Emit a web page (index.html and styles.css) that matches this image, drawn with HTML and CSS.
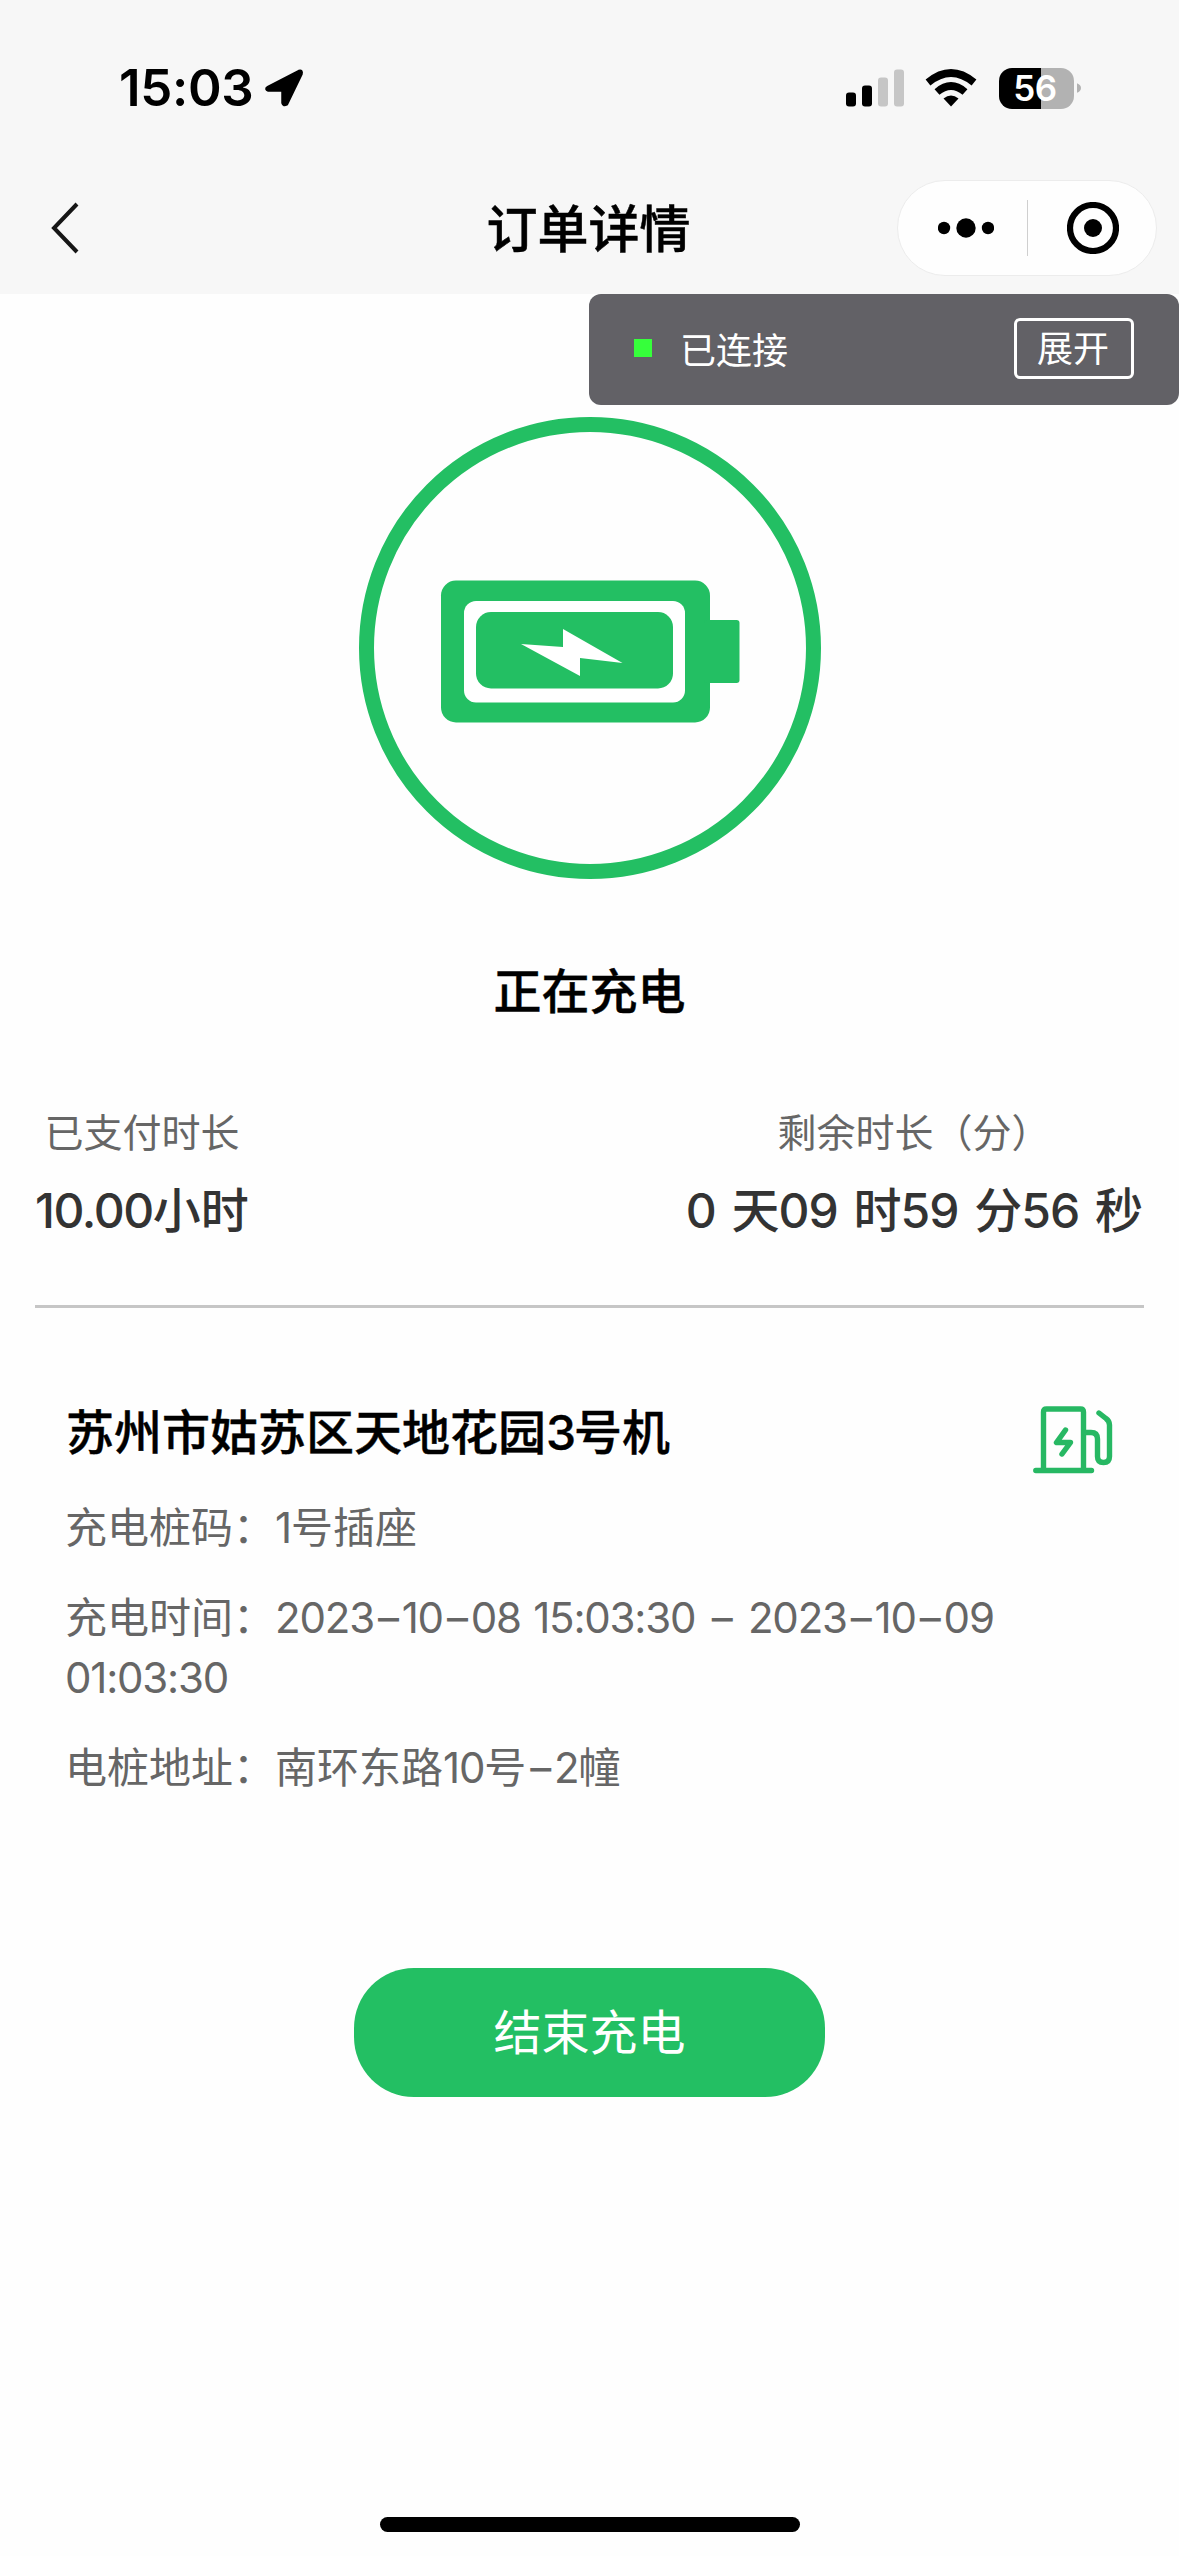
FILE: index.html
```html
<!DOCTYPE html>
<html lang="zh-CN">
<head>
<meta charset="utf-8">
<title>订单详情</title>
<link rel="stylesheet" href="styles.css">
</head>
<body>
<div class="screen">
  <header class="top">
    <div class="status">
      <div class="clock">
        <span class="clock-time">15:03</span>
        <svg class="location" viewBox="0 0 40 40"><path d="M4 19.500L35 3.500Q38 2.500 37 6L22.500 36Q19.500 37.500 19 35V22H4.500Q1.500 21 4 19.500Z" fill="#000" stroke="#000" stroke-width="3.500" stroke-linejoin="round"/></svg>
      </div>
      <div class="indicators">
        <svg class="signal" viewBox="0 0 58 38"><rect y="23.500" width="10" height="14" rx="3"/><rect x="16" y="16.500" width="10" height="21" rx="3"/><rect x="32" y="8.500" width="10" height="29" rx="3" fill="#c6c6c6"/><rect x="48" y="0.500" width="10" height="37" rx="3" fill="#c6c6c6"/></svg>
        <svg class="wifi" viewBox="0 0 52 38"><g fill="none" stroke="#000" stroke-width="7.500"><path d="M3 13.500Q26 -5.500 49 13.500"/><path d="M12 23Q26 11 40 23"/></g><path d="M18.500 29.500Q26 23.500 33.500 29.500L26 37.500Z"/></svg>
        <div class="battery"><span class="battery-level">56</span></div>
        <svg class="battery-tip" viewBox="0 0 5 12"><path d="M0 0Q5 2 5 6T0 12Z" fill="#b2b2b2"/></svg>
      </div>
    </div>
    <nav class="nav">
      <svg class="back" viewBox="0 0 28 52"><path d="M26 2L3 26L26 50" fill="none" stroke="#161616" stroke-width="4"/></svg>
      <h1 class="nav-title">订单详情</h1>
      <div class="capsule">
        <svg class="more" viewBox="0 0 56 20"><circle cx="6" cy="10" r="6.200"/><circle cx="28" cy="10" r="9.700"/><circle cx="50" cy="10" r="6.200"/></svg>
        <span class="capsule-line"></span>
        <svg class="close" viewBox="0 0 52 52"><circle cx="26" cy="26" r="23" fill="none" stroke="#000" stroke-width="6.200"/><circle cx="26" cy="26" r="9"/></svg>
      </div>
    </nav>
  </header>
  <aside class="connection">
    <span class="dot"></span>
    <span class="connection-text">已连接</span>
    <button class="expand">展开</button>
  </aside>
  <main class="content">
    <svg class="charge" viewBox="0 0 462 462">
      <circle cx="231" cy="231" r="223.500" fill="none" stroke="#23bf63" stroke-width="15"/>
      <rect x="82" y="163.500" width="269" height="142" rx="15" fill="#23bf63"/>
      <rect x="345" y="203" width="35.500" height="63" rx="3" fill="#23bf63"/>
      <rect x="105" y="184" width="221" height="101.500" rx="12" fill="#fff"/>
      <rect x="117" y="195" width="197" height="76.500" rx="15" fill="#23bf63"/>
      <path d="M162 227L204 230V212L263.500 246L221 241V259Z" fill="#fff"/>
    </svg>
    <h2 class="state">正在充电</h2>
    <section class="durations">
      <div class="duration">
        <span class="duration-label">已支付时长</span>
        <span class="duration-value"><span class="paid">10.00</span>小时</span>
      </div>
      <div class="duration remaining">
        <span class="duration-label">剩余时长（分）</span>
        <span class="duration-value countdown">0 天09 时59 分56 秒</span>
      </div>
    </section>
    <section class="station">
      <div class="station-head">
        <h3 class="station-name">苏州市姑苏区天地花园<span class="unit">3</span>号机</h3>
        <svg class="pump" viewBox="0 0 80 68"><g fill="none" stroke="#27b863" stroke-width="5.400" stroke-linecap="round" stroke-linejoin="round"><path d="M2.800 64.500H58.500M10.500 64V6Q10.500 3 13.500 3H47.500Q50.500 3 50.500 6V64"/><path d="M51 26.500H58Q64.500 26.500 64.500 33V50.500Q64.500 56.500 70.500 56.500T76.500 50.500V19Q76.500 15 73 12.500L66 7"/><path d="M32.500 24L23.500 36.500H37.500L29 48"/></g></svg>
      </div>
      <p class="detail">充电桩码：<span class="num">1</span>号插座</p>
      <p class="detail">充电时间：<span class="num">2023<span class="dash">–</span>10<span class="dash">–</span>08 15:03:30 <span class="dash">–</span> 2023<span class="dash">–</span>10<span class="dash">–</span>09 01:03:30</span></p>
      <p class="detail">电桩地址：南环东路<span class="num">10</span>号<span class="num"><span class="dash">–</span>2</span>幢</p>
    </section>
    <button class="stop">结束充电</button>
  </main>
  <div class="home"></div>
</div>
</body>
</html>
```
FILE: styles.css
```css
* { box-sizing: border-box; }
body, h1, h2, h3, p { margin: 0; }
body { background: #fefefe; font-family: Inter, "Noto Sans CJK SC", sans-serif; color: #000; }
button { font-family: inherit; margin: 0; padding: 0; }
svg { display: block; flex: none; }
.screen { position: relative; display: flex; flex-direction: column; width: 1179px; height: 2556px; overflow: hidden; }

.top { height: 294px; background: #f7f7f7; }
.status { display: flex; justify-content: space-between; align-items: center; height: 176px; padding: 0 98px 0 119px; }
.clock { display: flex; align-items: center; gap: 12px; }
.clock-time { width: 133px; font-size: 51px; font-weight: 600; line-height: 60px; letter-spacing: -0.300px; white-space: nowrap; }
.location { width: 40px; height: 40px; }
.indicators { display: flex; align-items: center; }
.signal { width: 58px; height: 38px; }
.wifi { width: 52px; height: 38px; margin-left: 21px; }
.battery { display: flex; align-items: center; justify-content: center; width: 75px; height: 41px; margin-left: 22px; border-radius: 13px; background: linear-gradient(90deg, #000 55.500%, #b2b2b2 55.500%); color: #fff; }
.battery-level { margin-right: 3px; font-size: 35px; font-weight: 600; line-height: 41px; letter-spacing: -0.5px; }
.battery-tip { width: 4px; height: 12px; margin-left: 3px; }

.nav { display: grid; grid-template-columns: 282px 1fr 282px; align-items: center; height: 104px; }
.back { width: 28px; height: 52px; margin-left: 51px; }
.nav-title { margin-top: 4px; padding-right: 2px; text-align: center; font-size: 51px; font-weight: 500; line-height: 70px; -webkit-text-stroke: 0.500px #000; }
.capsule { display: flex; align-items: center; width: 260px; height: 96px; padding: 0 0 0 40px; border: 1px solid #ececec; border-radius: 48px; background: #fefefe; }
.more { width: 56px; height: 20px; }
.capsule-line { flex: none; width: 1px; height: 56px; margin: 0 39px 0 33px; background: #cfcfcf; }
.close { width: 52px; height: 52px; }

.connection { position: absolute; top: 294px; right: 0; display: flex; align-items: center; width: 590px; height: 111px; padding: 0 45px; border-radius: 12px; background: #626166; color: #fff; }
.dot { width: 18px; height: 18px; margin-top: -3px; background: #36ff3b; }
.connection-text { margin: 3px 0 0 28px; font-size: 36px; line-height: 52px; }
.expand { width: 120px; height: 61px; margin: -3px 0 0 auto; padding: 1px 2px 0 0; border: 3px solid #fff; border-radius: 6px; background: none; color: #fff; font-size: 36px; line-height: 52px; }

.content { display: flex; flex-direction: column; padding: 123px 35px 0; }
.charge { align-self: center; width: 462px; height: 462px; }
.state { margin-top: 78px; text-align: center; font-size: 48px; font-weight: 500; line-height: 70px; -webkit-text-stroke: 0.400px #000; }
.durations { display: flex; justify-content: space-between; height: 210px; margin-top: 71px; border-bottom: 3px solid #c6c6c6; }
.duration { display: flex; flex-direction: column; align-items: center; }
.remaining { padding-right: 2px; }
.duration-label { font-size: 39px; line-height: 70px; color: #666; }
.duration-value { margin-top: 5px; font-size: 48px; font-weight: 500; line-height: 76px; color: #333; white-space: nowrap; }
.paid { letter-spacing: -1.400px; }
.countdown { letter-spacing: -1px; word-spacing: 4px; }

.station { padding: 86px 31px 0; }
.station-head { display: flex; justify-content: space-between; align-items: flex-start; height: 104px; }
.station-name { margin-top: 4px; font-size: 48px; font-weight: 500; line-height: 70px; -webkit-text-stroke: 0.400px #000; }
.unit { letter-spacing: -2px; }
.pump { width: 80px; height: 68px; margin-top: 12px; }
.detail { margin: 0 0 30px -1px; font-size: 42px; line-height: 60px; color: #666; }
.num { letter-spacing: -1.200px; word-spacing: 1.800px; }
.dash { padding: 0 4px; }
.stop { align-self: center; width: 471px; height: 129px; margin-top: 140px; border: 0; border-radius: 60px; background: #23bf63; color: #fff; font-size: 48px; line-height: 70px; }
.home { position: absolute; left: 380px; top: 2517px; width: 420px; height: 15px; border-radius: 8px; background: #000; }
```
